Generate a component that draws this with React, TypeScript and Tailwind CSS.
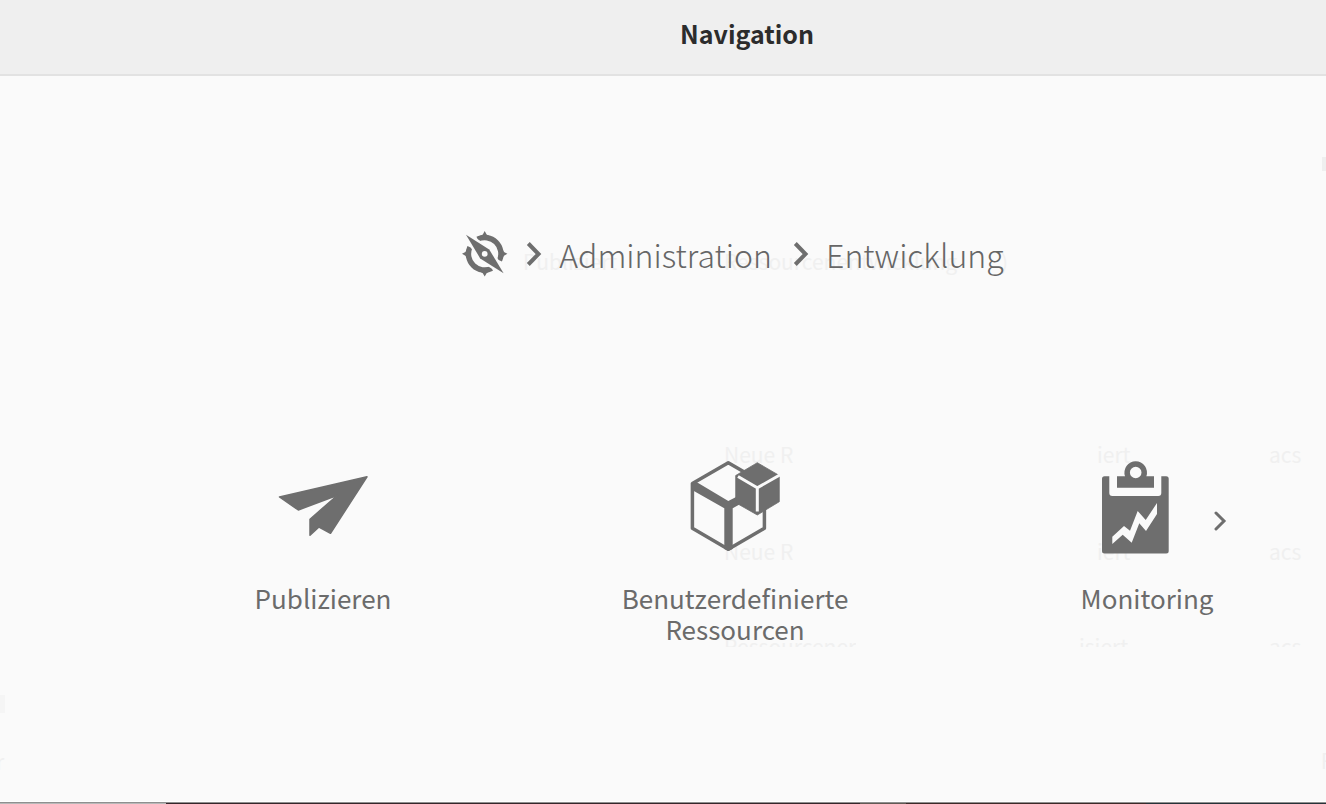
import type { ReactNode } from 'react';

function CompassIcon() {
  return (
    <svg viewBox="0 0 46 46" className="size-[46px] shrink-0" aria-hidden="true">
      <path
        d="M15.600 8.200 A16.200 16.200 0 0 1 37.500 29.400 M29.800 37.400 A16.200 16.200 0 0 1 7.900 16.200"
        fill="none"
        stroke="#6e6e6e"
        strokeWidth="5.400"
      />
      <g fill="#6e6e6e">
        <path d="M22.700 0 L24.600 3.400 L29 6 H16.500 L20.800 3.400 Z" />
        <path d="M45.400 22.800 L42 24.700 L39.400 29 V16.500 L42 20.900 Z" />
        <path d="M22.700 45.600 L20.800 42.200 L16.500 39.600 H29 L24.600 42.200 Z" />
        <path d="M0 22.800 L3.400 20.900 L6 16.500 V29 L3.400 24.700 Z" />
      </g>
      <path
        d="M4 3.800 L27.200 18.400 L41.600 42.200 L18.200 27.400 Z"
        fill="#6e6e6e"
        stroke="#fafafa"
        strokeWidth="5"
        paintOrder="stroke"
      />
      <circle cx="22.700" cy="22.900" r="2.900" fill="#fafafa" />
    </svg>
  );
}

function Chevron() {
  return (
    <svg viewBox="0 0 16 26" className="h-[26px] w-4 shrink-0" aria-hidden="true">
      <path d="M2.300 2.500 L12.500 13 L2.300 23.500" fill="none" stroke="#6e6e6e" strokeWidth="4" />
    </svg>
  );
}

function PublishIcon() {
  return (
    <svg viewBox="0 0 92 94" className="h-[94px] w-[92px]" aria-hidden="true">
      <path
        d="M2.500 36 L90 15.800 L53.500 72.300 L42 66 L33 74.300 V58.200 L60.500 34.200 L21.300 49 Z"
        fill="#6e6e6e"
        stroke="#6e6e6e"
        strokeWidth="1.500"
        strokeLinejoin="round"
      />
    </svg>
  );
}

function ResourcesIcon() {
  return (
    <svg viewBox="0 0 92 94" className="h-[94px] w-[92px]" aria-hidden="true">
      <path
        d="M57 12 L39.300 1.800 L3.400 22.600 V67.300 L39.300 88.300 L75.400 67.300 V47"
        fill="none"
        stroke="#6e6e6e"
        strokeWidth="3.500"
        strokeLinejoin="round"
      />
      <path
        d="M3 22.500 L8.300 21.500 L39.300 40 L50 34.500 V43.800 L43.700 47.300 V88 L39.300 90 L35.300 88 V47.300 L4 29.500 Z"
        fill="#6e6e6e"
      />
      <path
        d="M68.300 1.700 L90.300 14.500 V40.700 L68.300 54 L46.700 41.700 V14.500 Z"
        fill="#6e6e6e"
        stroke="#6e6e6e"
        strokeWidth="0.800"
        strokeLinejoin="round"
      />
      <path d="M49 15.500 L68.300 26.800 L92 13.300 M68.300 26.800 V50.500" fill="none" stroke="#fafafa" strokeWidth="3" />
    </svg>
  );
}

function MonitoringIcon() {
  return (
    <svg viewBox="0 0 92 94" className="h-[94px] w-[92px]" aria-hidden="true">
      <path
        d="M3.500 15.300 H8.300 V32 Q8.300 35 11.300 35 H57.300 Q60.300 35 60.300 32 V15.300 H65.200 Q67.700 15.300 67.700 17.800 V90 Q67.700 92.500 65.200 92.500 H3.500 Q1 92.500 1 90 V17.800 Q1 15.300 3.500 15.300 Z"
        fill="#6e6e6e"
      />
      <path
        d="M16 15.300 H24 A11.300 11.300 0 1 1 45.400 15.300 H53 V26.700 H16 Z M40.500 11.500 A5.800 5.800 0 1 0 28.900 11.500 A5.800 5.800 0 1 0 40.500 11.500 Z"
        fill="#6e6e6e"
        fillRule="evenodd"
      />
      <path
        d="M11.300 75.700 L23 65 L29 69.700 L36.700 50 L44.700 59 L56 42 V53 L45 70 L38.300 62.300 L30.700 81.700 L21.700 73.700 L11.300 83 Z"
        fill="#fafafa"
      />
    </svg>
  );
}

function Tile({ icon, label }: { icon: ReactNode; label: string }) {
  return (
    <a href="#" className="flex w-60 flex-col items-center gap-[27px] text-center text-[26px] leading-[31px] text-[#6b6b6b]">
      {icon}
      <span>{label}</span>
    </a>
  );
}

function PageBehind() {
  return (
    <div aria-hidden="true" className="pointer-events-none absolute inset-0 overflow-hidden text-[21px] leading-6 text-[#f0f0f0]">
      <span className="absolute top-[249px] left-[523px]">Publiziert</span>
      <span className="absolute top-[249px] left-[724px]">Ressourcenentwicklung</span>
      <span className="absolute top-[249px] left-[1001px]">)</span>
      <span className="absolute top-[442px] left-[724px]">Neue R</span>
      <span className="absolute top-[539px] left-[724px]">Neue R</span>
      <span className="absolute top-[442px] left-[1097px]">iert</span>
      <span className="absolute top-[539px] left-[1097px]">iert</span>
      <span className="absolute top-[442px] left-[1269px]">acs</span>
      <span className="absolute top-[539px] left-[1269px]">acs</span>
      <span className="absolute top-[634px] left-[724px] h-[13px] overflow-hidden">Ressourcener</span>
      <span className="absolute top-[634px] left-[1079px] h-[13px] overflow-hidden">isiert</span>
      <span className="absolute top-[634px] left-[1269px] h-[13px] overflow-hidden">acs</span>
      <span className="absolute top-[157px] -right-px h-3.5 w-[5px] bg-[#efefef]" />
      <span className="absolute top-[695px] left-0 h-[18px] w-[5px] bg-[#f5f5f5]" />
      <span className="absolute top-[749px] -left-1">r</span>
      <span className="absolute top-[748px] -right-2">R</span>
    </div>
  );
}

export default function App() {
  return (
    <div className="relative flex min-h-screen flex-col bg-[#fafafa] font-['Noto_Sans_CJK_SC',sans-serif]">
      <PageBehind />
      <header className="relative flex h-[76px] items-center justify-center border-b-2 border-[#e2e2e2] bg-[#efefef] pb-2 pl-[168px]">
        <h1 className="text-[25px] leading-8 font-bold text-[#2c2c2c]">Navigation</h1>
      </header>

      <main className="relative flex grow flex-col">
        <nav aria-label="Brotkrumen" className="mt-[154px] flex h-12 items-center justify-center pl-[140px] text-[32px] leading-[48px] font-light text-[#666666]">
          <a href="#" aria-label="Navigation" className="mr-[18px]">
            <CompassIcon />
          </a>
          <Chevron />
          <a href="#" className="mr-[21px] ml-[17px]">Administration</a>
          <Chevron />
          <a href="#" className="ml-[17px]">Entwicklung</a>
        </nav>

        <section aria-label="Entwicklung" className="relative mt-[183px] flex justify-center gap-[172px] pl-36">
          <Tile icon={<PublishIcon />} label="Publizieren" />
          <Tile icon={<ResourcesIcon />} label="Benutzerdefinierte Ressourcen" />
          <Tile icon={<MonitoringIcon />} label="Monitoring" />
          <button type="button" aria-label="Weiter" className="absolute top-12 right-24 p-0.5">
            <svg viewBox="0 0 14 20" className="h-5 w-3.5" aria-hidden="true">
              <path d="M2 2 L10 10 L2 18" fill="none" stroke="#6e6e6e" strokeWidth="3" strokeLinecap="round" />
            </svg>
          </button>
        </section>
      </main>

      <footer className="relative border-t border-white">
        <div className="h-px bg-[#8f8f8f]" />
        <div className="flex h-px">
          <div className="w-1/8 bg-[#b8b8b8]" />
          <div className="grow bg-[#35262a]" />
          <div className="w-[46px] bg-[#625a54]" />
          <div className="w-[240px] bg-[#3c2a28]" />
          <div className="w-[180px] bg-[#263238]" />
        </div>
      </footer>
    </div>
  );
}
